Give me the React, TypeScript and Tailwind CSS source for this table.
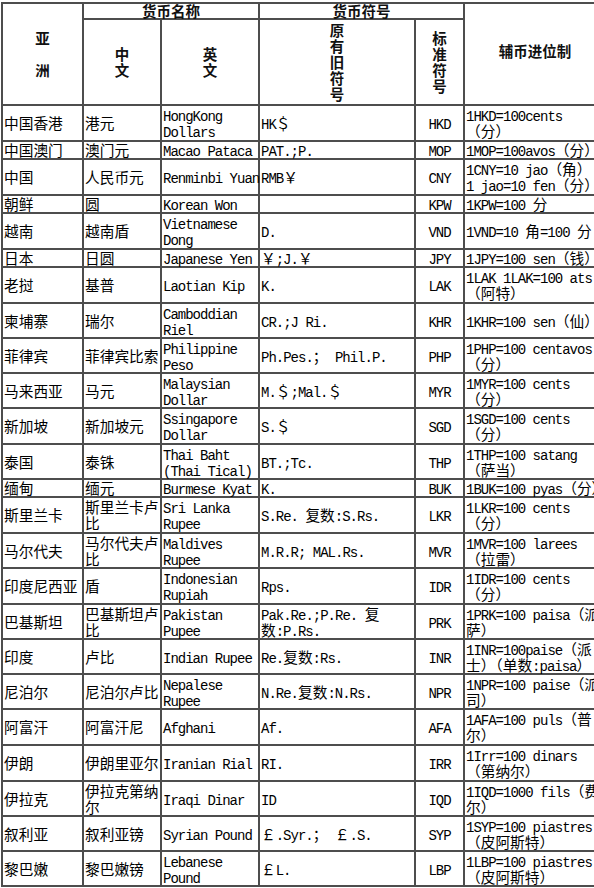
import React from 'react';

type Row = [string, string, string, string, string, string];

const rows: Row[] = [
  ['中国香港', '港元', 'HongKong\nDollars', 'HK＄', 'HKD', '1HKD=100cents\n（分）'],
  ['中国澳门', '澳门元', 'Macao Pataca', 'PAT.;P.', 'MOP', '1MOP=100avos（分）'],
  ['中国', '人民币元', 'Renminbi Yuan', 'RMB￥', 'CNY', '1CNY=10 jao（角）\n1 jao=10 fen（分）'],
  ['朝鲜', '圆', 'Korean Won', '', 'KPW', '1KPW=100 分'],
  ['越南', '越南盾', 'Vietnamese\nDong', 'D.', 'VND', '1VND=10 角=100 分'],
  ['日本', '日圆', 'Japanese Yen', '￥;J.￥', 'JPY', '1JPY=100 sen（钱）'],
  ['老挝', '基普', 'Laotian Kip', 'K.', 'LAK', '1LAK 1LAK=100 ats\n（阿特）'],
  ['柬埔寨', '瑞尔', 'Camboddian\nRiel', 'CR.;J Ri.', 'KHR', '1KHR=100 sen（仙）'],
  ['菲律宾', '菲律宾比索', 'Philippine\nPeso', 'Ph.Pes.； Phil.P.', 'PHP', '1PHP=100 centavos\n（分）'],
  ['马来西亚', '马元', 'Malaysian\nDollar', 'M.＄;Mal.＄', 'MYR', '1MYR=100 cents\n（分）'],
  ['新加坡', '新加坡元', 'Ssingapore\nDollar', 'S.＄', 'SGD', '1SGD=100 cents\n（分）'],
  ['泰国', '泰铢', 'Thai Baht\n(Thai Tical)', 'BT.;Tc.', 'THP', '1THP=100 satang\n（萨当）'],
  ['缅甸', '缅元', 'Burmese Kyat', 'K.', 'BUK', '1BUK=100 pyas（分）'],
  ['斯里兰卡', '斯里兰卡卢\n比', 'Sri Lanka\nRupee', 'S.Re. 复数:S.Rs.', 'LKR', '1LKR=100 cents\n（分）'],
  ['马尔代夫', '马尔代夫卢\n比', 'Maldives\nRupee', 'M.R.R; MAL.Rs.', 'MVR', '1MVR=100 larees\n（拉雷）'],
  ['印度尼西亚', '盾', 'Indonesian\nRupiah', 'Rps.', 'IDR', '1IDR=100 cents\n（分）'],
  ['巴基斯坦', '巴基斯坦卢\n比', 'Pakistan\nPupee', 'Pak.Re.;P.Re. 复\n数:P.Rs.', 'PRK', '1PRK=100 paisa（派\n萨）'],
  ['印度', '卢比', 'Indian Rupee', 'Re.复数:Rs.', 'INR', '1INR=100paise（派\n士）（单数:paisa）'],
  ['尼泊尔', '尼泊尔卢比', 'Nepalese\nRupee', 'N.Re.复数:N.Rs.', 'NPR', '1NPR=100 paise（派\n司）'],
  ['阿富汗', '阿富汗尼', 'Afghani', 'Af.', 'AFA', '1AFA=100 puls（普\n尔）'],
  ['伊朗', '伊朗里亚尔', 'Iranian Rial', 'RI.', 'IRR', '1Irr=100 dinars\n（第纳尔）'],
  ['伊拉克', '伊拉克第纳\n尔', 'Iraqi Dinar', 'ID', 'IQD', '1IQD=1000 fils（费\n尔）'],
  ['叙利亚', '叙利亚镑', 'Syrian Pound', '￡.Syr.； ￡.S.', 'SYP', '1SYP=100 piastres\n（皮阿斯特）'],
  ['黎巴嫩', '黎巴嫩镑', 'Lebanese\nPound', '￡L.', 'LBP', '1LBP=100 piastres\n（皮阿斯特）'],
];

const CJK = /([\u2E80-\u9FFF\u3000-\u303F\uFF00-\uFFEF]+)/;

// mixed line: CJK runs get the wide font, latin runs the narrow mono
const Line = ({ text }: { text: string }) => (
  <div className="whitespace-pre leading-[16px] h-[16px]">
    {text.split(CJK).map((part, i) =>
      i % 2 === 1 ? (
        <span key={i} className="font-['Noto_Sans_CJK_SC',sans-serif] text-[14.7px]">
          {part}
        </span>
      ) : (
        <span key={i} className="font-['Liberation_Mono',monospace] text-[14px] tracking-[-1px]">
          {part}
        </span>
      )
    )}
  </div>
);

const cell = 'border-r-2 border-b-2 border-[#4d4d4d] flex items-center text-black';
const head =
  "border-r-2 border-b-2 border-[#4d4d4d] flex flex-col items-center justify-center text-center font-bold text-[14.5px] leading-[16px] font-['Noto_Sans_CJK_SC',sans-serif] text-[#111]";

const Stack = ({ chars }: { chars: string[] }) => (
  <>
    {chars.map((c, i) => (
      <div key={i} className="h-[16px]">
        {c}
      </div>
    ))}
  </>
);

export default function App() {
  return (
    <div className="w-[594px] h-[888px] overflow-hidden bg-white pt-[2px] pl-px">
      <div className="grid w-max grid-cols-[81px_78px_98px_156px_49px_142px] grid-rows-[16px_86px_36px_18px_36px_18px_36px_18px_36px_35px_35px_35px_36px_35px_18px_36px_35px_36px_35px_35px_35px_36px_36px_35px_35px_35px] border-t-2 border-l-2 border-[#4d4d4d]">
        {/* header */}
        <div className={`${head} row-span-2`}>
          <Stack chars={['亚', '', '洲']} />
        </div>
        <div className={`${head} col-span-2`}>货币名称</div>
        <div className={`${head} col-span-2`}>货币符号</div>
        <div className={`${head} row-span-2 pb-[6px]`}>辅币进位制</div>
        <div className={head}>
          <Stack chars={['中', '文']} />
        </div>
        <div className={head}>
          <Stack chars={['英', '文']} />
        </div>
        <div className={head}>
          <Stack chars={['原', '有', '旧', '符', '号']} />
        </div>
        <div className={head}>
          <Stack chars={['标', '准', '符', '号']} />
        </div>

        {/* body */}
        {rows.map((r, ri) =>
          r.map((v, ci) => (
            <div key={`${ri}-${ci}`} className={`${cell} ${ci === 4 ? 'justify-center' : 'pl-px'}`}>
              <div>
                {v.split('\n').map((l, li) => (
                  <Line key={li} text={l} />
                ))}
              </div>
            </div>
          ))
        )}
      </div>
    </div>
  );
}
